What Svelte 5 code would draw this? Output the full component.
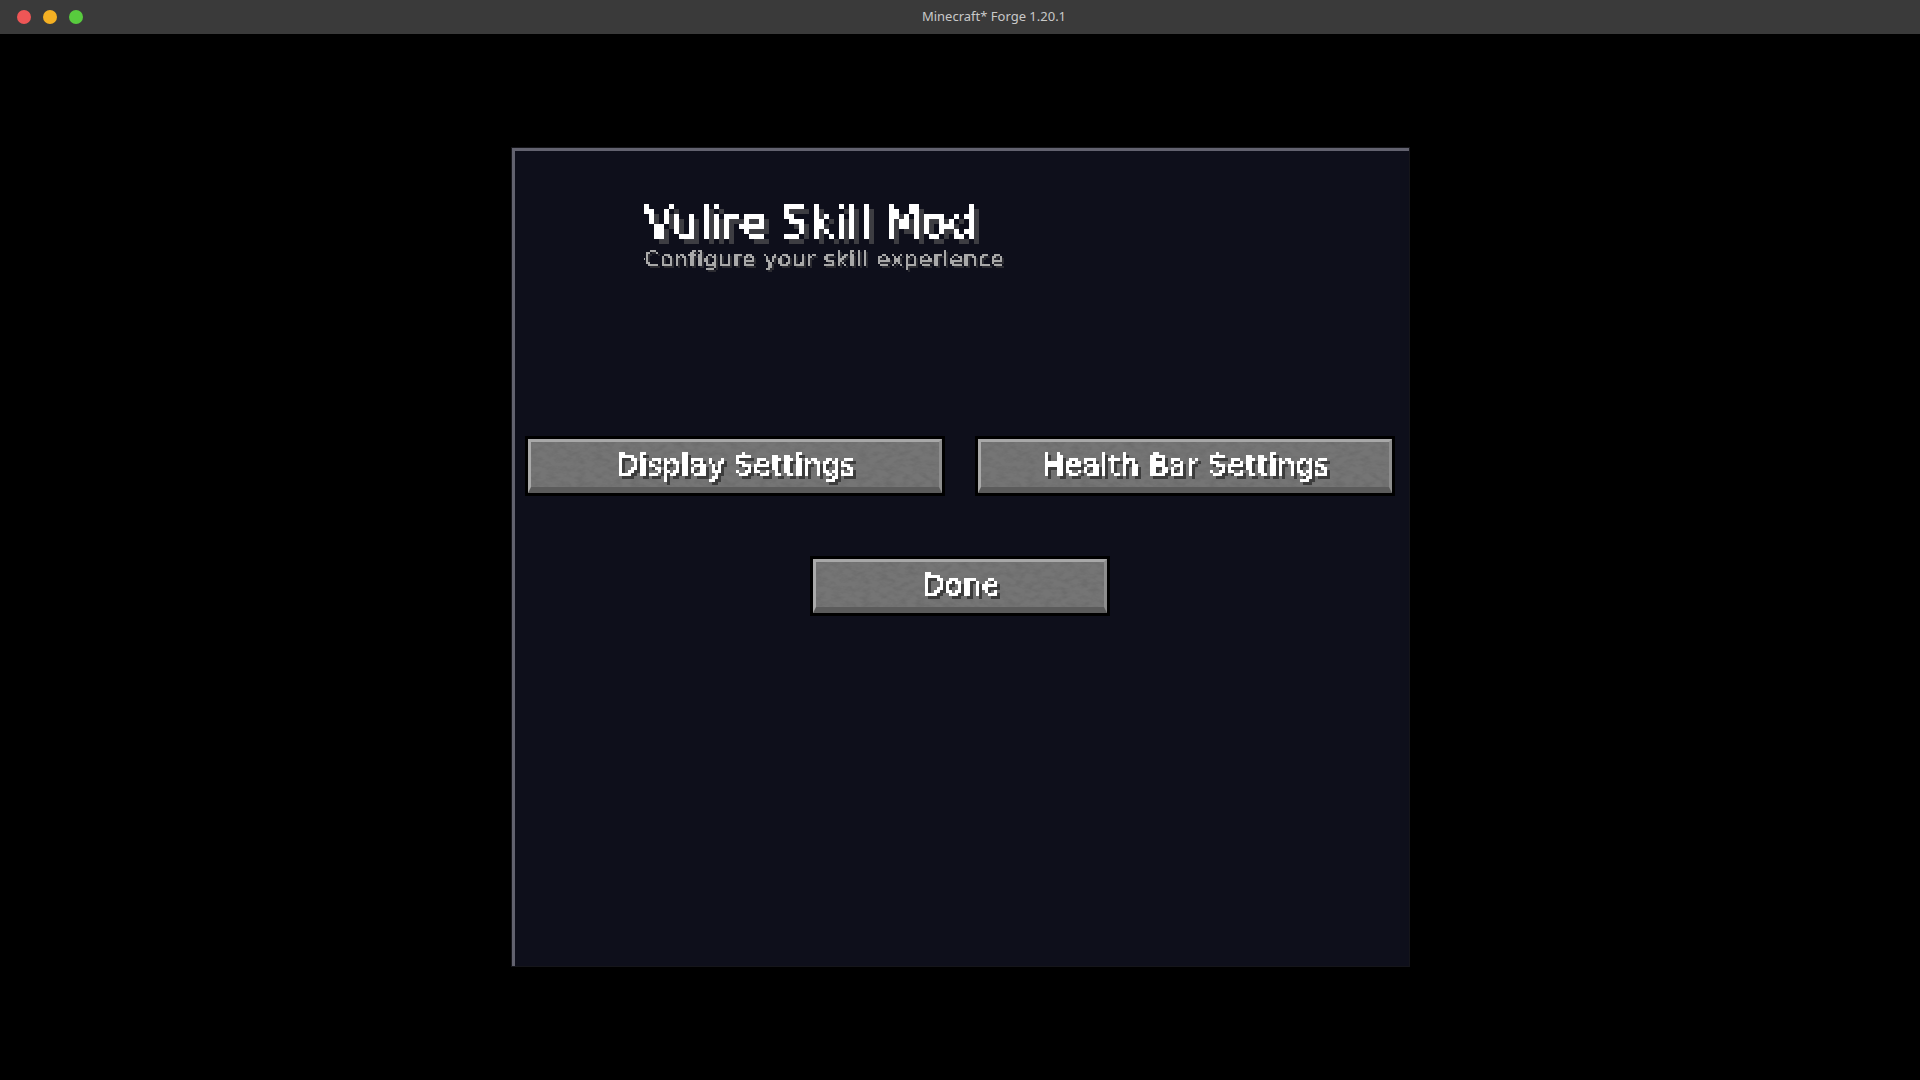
<script>
  const rows = [["Display Settings", "Health Bar Settings"]];
</script>

<svg class="defs" aria-hidden="true">
  <defs>
    <filter id="px3" x="0" y="0" width="100%" height="100%" color-interpolation-filters="sRGB">
      <feFlood x="1" y="1" width="1" height="1" flood-color="#fff" />
      <feComposite width="3" height="3" />
      <feTile result="grid" />
      <feComposite in="SourceGraphic" in2="grid" operator="in" />
      <feMorphology operator="dilate" radius="1" />
      <feComponentTransfer result="t"><feFuncA type="discrete" tableValues="0 1 1 1" /></feComponentTransfer>
      <feOffset in="t" dx="3" dy="3" result="o" />
      <feFlood flood-color="#3c3c3c" />
      <feComposite in2="o" operator="in" result="s" />
      <feMerge><feMergeNode in="s" /><feMergeNode in="t" /></feMerge>
    </filter>
    <filter id="px5" x="0" y="0" width="100%" height="100%" color-interpolation-filters="sRGB">
      <feFlood x="2" y="2" width="1" height="1" flood-color="#fff" />
      <feComposite width="5" height="5" />
      <feTile result="grid" />
      <feComposite in="SourceGraphic" in2="grid" operator="in" />
      <feMorphology operator="dilate" radius="2" />
      <feComponentTransfer result="t"><feFuncA type="discrete" tableValues="0 1 1 1" /></feComponentTransfer>
      <feOffset in="t" dx="5" dy="5" result="o" />
      <feFlood flood-color="#3d3d42" />
      <feComposite in2="o" operator="in" result="s" />
      <feMerge><feMergeNode in="s" /><feMergeNode in="t" /></feMerge>
    </filter>
    <filter id="px2" x="0" y="0" width="100%" height="100%" color-interpolation-filters="sRGB">
      <feFlood x="0" y="0" width="1" height="1" flood-color="#fff" />
      <feComposite width="2" height="2" />
      <feTile result="grid" />
      <feComposite in="SourceGraphic" in2="grid" operator="in" />
      <feConvolveMatrix order="2" kernelMatrix="1 1 1 1" divisor="1" targetX="1" targetY="1" preserveAlpha="false" />
      <feComponentTransfer result="t"><feFuncA type="discrete" tableValues="0 1 1 1" /></feComponentTransfer>
      <feOffset in="t" dx="2" dy="2" result="o" />
      <feFlood flood-color="#2b2b31" />
      <feComposite in2="o" operator="in" result="s" />
      <feMerge><feMergeNode in="s" /><feMergeNode in="t" /></feMerge>
    </filter>
    <filter id="stone" x="0" y="0" width="100%" height="100%" color-interpolation-filters="sRGB">
      <feTurbulence type="fractalNoise" baseFrequency="0.11 0.2" numOctaves="3" seed="7" />
      <feColorMatrix type="matrix" values="0 0 0 0 0.2  0 0 0 0 0.2  0 0 0 0 0.2  1.4 0 0 0 -0.55" />
    </filter>
  </defs>
</svg>

<div class="window">
  <header class="titlebar">
    <div class="lights">
      <span class="light red"></span>
      <span class="light amber"></span>
      <span class="light green"></span>
    </div>
    <div class="wintitle">Minecraft* Forge 1.20.1</div>
  </header>

  <main class="stage">
    <section class="panel">
      <div class="heading">
        <h1 class="title">Vulire Skill Mod</h1>
        <p class="subtitle">Configure your skill experience</p>
      </div>
      <div class="actions">
        {#each rows as row}
          <div class="row">
            {#each row as label}
              <button class="mc wide">
                <span class="face"><span class="noise"></span><span class="label">{label}</span></span>
              </button>
            {/each}
          </div>
        {/each}
        <button class="mc done">
          <span class="face"><span class="noise"></span><span class="label">Done</span></span>
        </button>
      </div>
    </section>
  </main>
</div>

<style>
  :global(body) {
    margin: 0;
    background: #000;
  }
  .defs {
    position: absolute;
    width: 0;
    height: 0;
  }
  .window {
    width: 1920px;
    height: 1080px;
    overflow: hidden;
    display: flex;
    flex-direction: column;
    background: #000;
  }
  .titlebar {
    height: 34px;
    flex: none;
    display: flex;
    align-items: center;
    background: #3a3a3a;
  }
  .lights {
    display: flex;
    gap: 12px;
    padding-left: 17px;
    padding-bottom: 1px;
  }
  .light {
    width: 14px;
    height: 14px;
    border-radius: 50%;
  }
  .red { background: #ee5656; }
  .amber { background: #f4b023; }
  .green { background: #58cb3e; }
  .wintitle {
    flex: 1;
    padding: 0 15px 3px 0;
    text-align: center;
    font: 13px "Noto Sans", sans-serif;
    color: #c9c9c9;
  }
  .stage {
    flex: 1;
    display: flex;
    flex-direction: column;
    align-items: center;
    padding-top: 113px;
  }
  .panel {
    box-sizing: border-box;
    width: 899px;
    height: 820px;
    background: #0e0f1b;
    border: 1px solid #15151a;
    box-shadow: inset 3px 3px 0 #62626f;
    padding: 3px 0 0 3px;
  }
  .heading {
    padding: 43px 0 0 129px;
    height: 285px;
    box-sizing: border-box;
  }
  .title {
    margin: 0;
    width: max-content;
    padding: 2px 10px 10px 0;
    font: 400 44px/52px "DejaVu Sans", sans-serif;
    letter-spacing: -0.1px;
    color: #fff;
    -webkit-text-stroke: 0.5px #fff;
    filter: url(#px5);
  }
  .subtitle {
    margin: -14px 0 0;
    width: max-content;
    padding: 0 6px 4px 0;
    font: 400 22px/30px "DejaVu Sans", sans-serif;
    letter-spacing: 0.62px;
    color: #a9a9a9;
    filter: url(#px2);
  }
  .actions {
    width: 870px;
    margin-left: 10px;
    display: flex;
    flex-direction: column;
    gap: 60px;
  }
  .row {
    display: flex;
    justify-content: space-between;
  }
  .mc {
    box-sizing: border-box;
    display: flex;
    height: 60px;
    padding: 3px;
    border: 0;
    background: #000;
    appearance: none;
  }
  .wide { width: 420px; }
  .done { width: 300px; margin-left: 285px; }
  .face {
    position: relative;
    flex: 1;
    box-sizing: border-box;
    display: flex;
    align-items: center;
    justify-content: center;
    overflow: hidden;
    background: #757575;
    border-style: solid;
    border-color: #a8a8a8 #8d8d8d #5b5b5b #aaaaaa;
    border-width: 3px 3px 6px 3px;
  }
  .noise {
    position: absolute;
    inset: 0;
    background: #000;
    filter: url(#stone);
    opacity: 0.22;
  }
  .label {
    position: relative;
    padding: 4px 3px 3px 6px;
    font: 400 28.8px/36px "DejaVu Sans", sans-serif;
    letter-spacing: 0.38px;
    color: #fff;
    -webkit-text-stroke: 0.4px #fff;
    filter: url(#px3);
  }
</style>
